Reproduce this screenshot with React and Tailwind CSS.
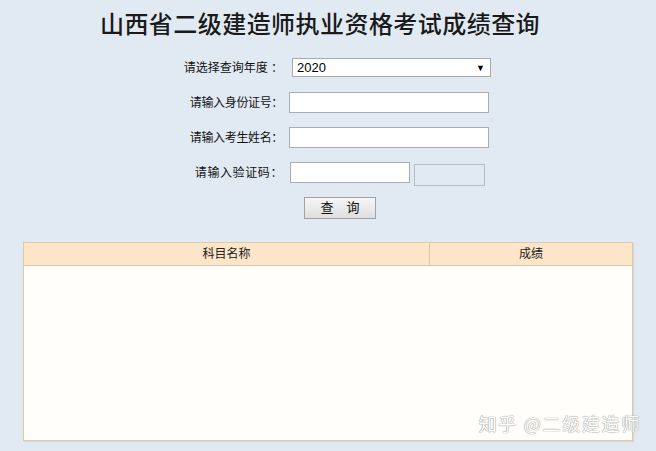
import React, { useState } from 'react';

const labelCls = 'text-right text-[12px] text-[#111] whitespace-pre';
const inputCls = 'h-[21px] border border-[#a9adb3] bg-white outline-none px-1 text-[12px]';

const FormRow = ({ label, children, labelW = 'w-[100px]', offset = 'ml-[6px]' }) => (
  <div className="flex items-center h-[35px]">
    <span className={`${labelCls} ${labelW}`}>{label}</span>
    <div className={`${offset} flex items-center`}>{children}</div>
  </div>
);

const App = () => {
  const [year, setYear] = useState('2020');

  return (
    <div
      className="w-[656px] h-[451px] bg-[#e1eaf3] overflow-hidden relative"
      style={{ fontFamily: '"Liberation Sans", "Noto Sans CJK SC", sans-serif' }}
    >
      {/* Title */}
      <h1
        className="text-center pr-[16px] text-[24px] leading-[30px] pt-[8px] font-medium text-[#1a1a1a] tracking-[0.45px]"
        style={{ fontFamily: '"Noto Sans CJK SC", sans-serif' }}
      >
        山西省二级建造师执业资格考试成绩查询
      </h1>

      {/* Form */}
      <div className="flex flex-col items-start pl-[183px] mt-[12px]">
        <FormRow label="请选择查询年度 ：" offset="ml-[9px]">
          <div className="relative w-[199px] h-[19px] border border-[#a9a9a9] bg-white flex items-center">
            <span className="pl-[4px] text-[13px] text-black">{year}</span>
            <span className="absolute right-[5px] top-[3px] text-[9px] text-black">▼</span>
            <select
              value={year}
              onChange={(e) => setYear(e.target.value)}
              className="absolute inset-0 opacity-0"
            >
              <option>2020</option>
              <option>2019</option>
            </select>
          </div>
        </FormRow>
        <FormRow label="请输入身份证号：" labelW="w-[100px] tracking-[-0.35px]">
          <input type="text" className={`${inputCls} w-[200px]`} />
        </FormRow>
        <FormRow label="请输入考生姓名：" labelW="w-[100px] tracking-[-0.35px]">
          <input type="text" className={`${inputCls} w-[200px]`} />
        </FormRow>
        <FormRow label="请输入验证码：" labelW="w-[100px] tracking-[0.6px]" offset="ml-[7px]">
          <input type="text" className={`${inputCls} w-[120px]`} />
          <div className="ml-[4px] mt-[4px] w-[71px] h-[22px] border border-[#b4bcc4] bg-[#e1eaf3]"></div>
        </FormRow>
        <div className="ml-[121px] mt-[5px]">
          <button
            type="button"
            className="w-[72px] h-[22px] border border-[#a3a3a3] bg-gradient-to-b from-[#f6f6f6] to-[#dedede] text-[13px] text-[#111] whitespace-pre"
          >
            查　询
          </button>
        </div>
      </div>

      {/* Result table */}
      <div className="mx-[23px] mt-[23px] w-[610px] h-[199px] border border-[#e4c7a4] bg-[#fffefb] flex flex-col shadow-[1px_1px_1px_rgba(0,0,0,0.08)]">
        <div className="flex h-[23px] bg-[#fde5c9] border-b border-[#e4c7a4] text-[12px] text-[#222]">
          <div className="w-[406px] flex items-center justify-center border-r border-[#e4c7a4]">科目名称</div>
          <div className="flex-1 flex items-center justify-center">成绩</div>
        </div>
        <div className="flex-1"></div>
      </div>

      {/* Watermark */}
      <div
        className="absolute right-[15px] top-[410px] text-[18px] text-white tracking-[1.7px]"
        style={{
          fontFamily: '"Noto Sans CJK SC", sans-serif',
          textShadow: '0 0 1px #888, 0 0 1px #999',
        }}
      >
        知乎 @二级建造师
      </div>
    </div>
  );
};

export default App;
